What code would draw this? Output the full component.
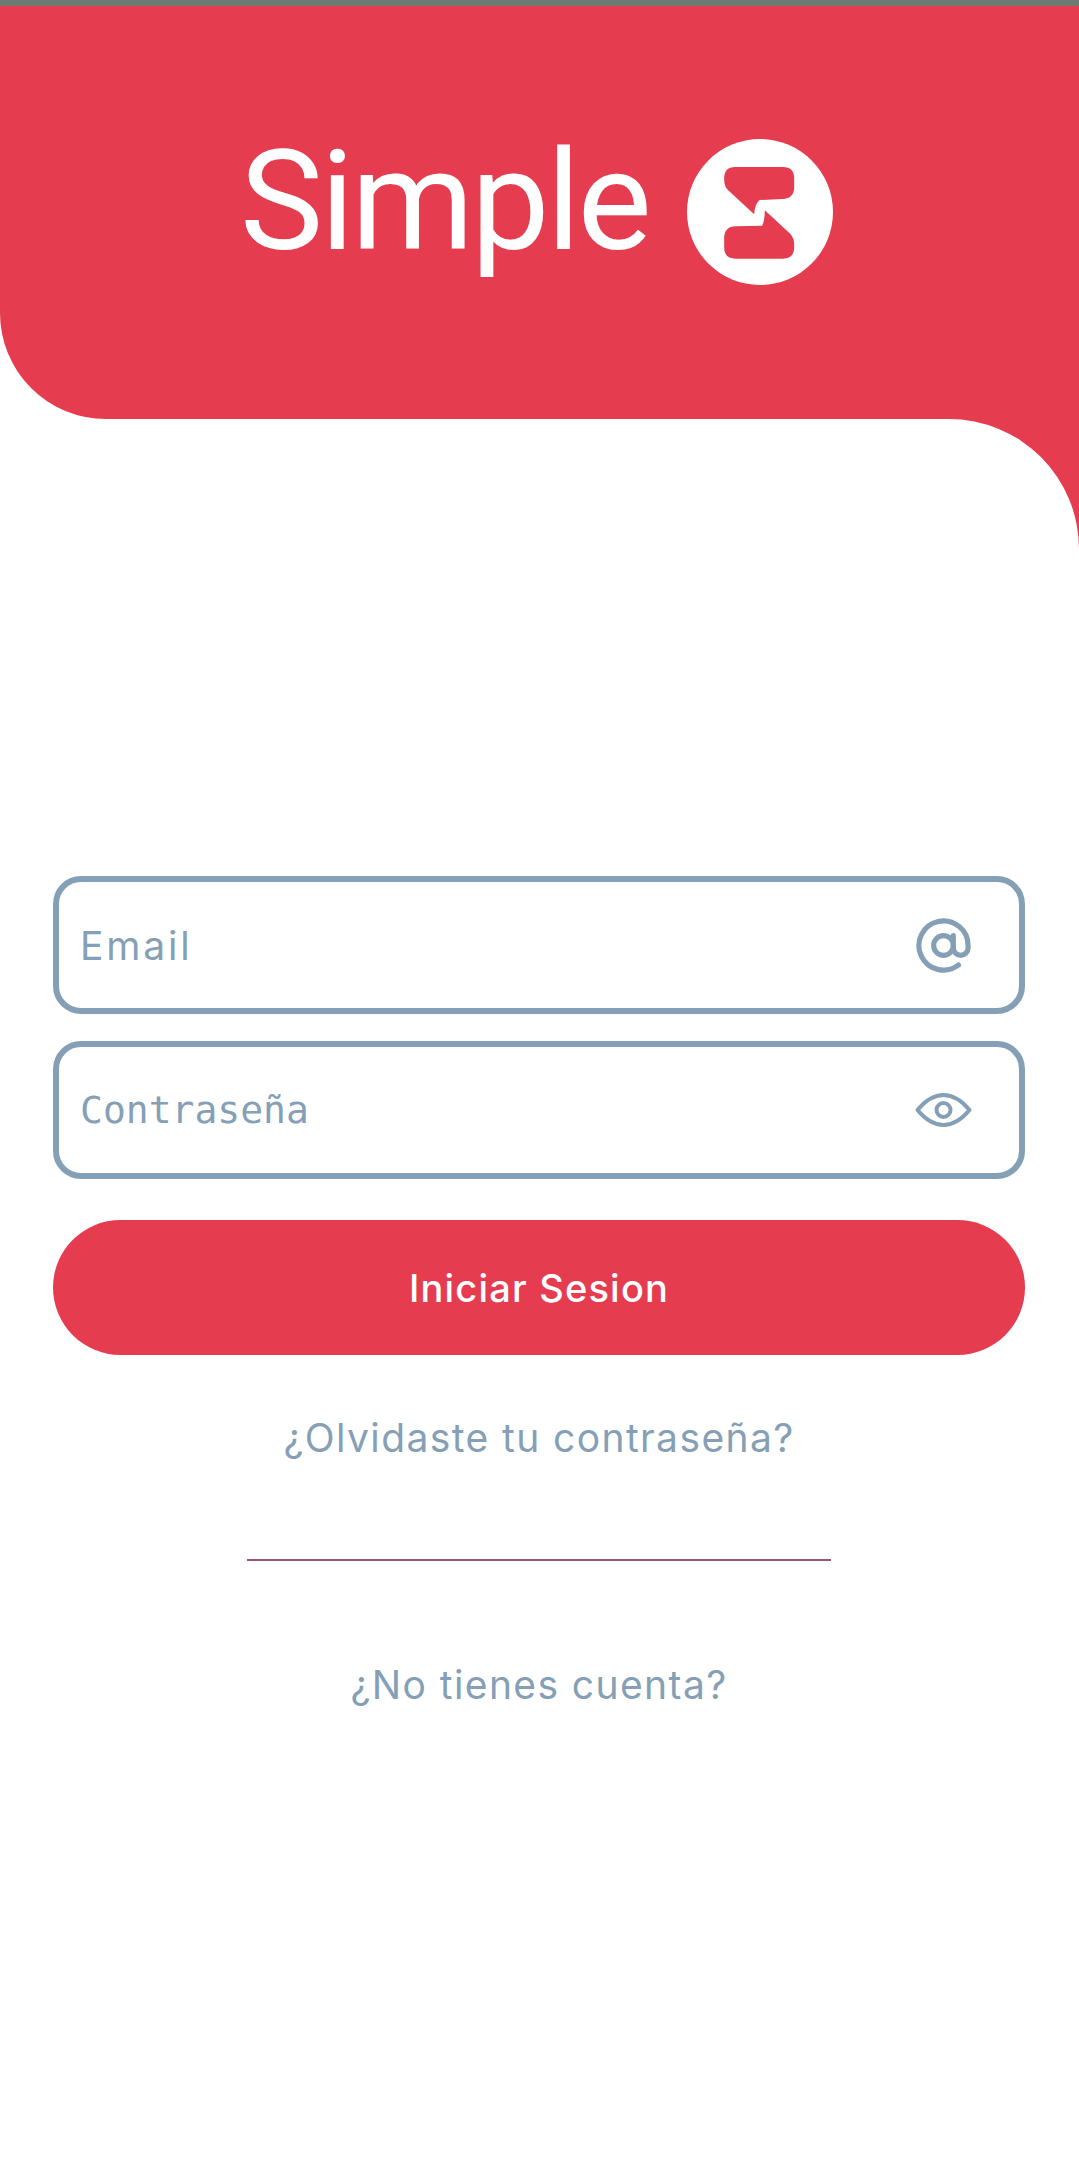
<div class="page">
  <div class="statusbar"></div>
  <header class="hero">
    <div class="brand">
      <span class="wordmark">Simple</span>
      <svg class="mark" viewBox="18.5 26 438 438" aria-hidden="true">
        <circle cx="237.5" cy="245" r="219" fill="#fff"/>
        <path fill="#e53c50" d="M164 110H306Q340 110 340 144V170Q340 205 305 206L236 209Q222 222 220 252L142 180Q130 168 130 148V144Q130 110 164 110Z"/>
        <path fill="#e53c50" d="M306 385H164Q130 385 130 351V324Q130 289 165 288L244 286Q252 270 252 240L328 310Q340 322 340 344V351Q340 385 306 385Z"/>
      </svg>
    </div>
  </header>
  <div class="shell">
    <main class="panel">
      <form class="form">
        <label class="field">
          <span class="ph email">Email</span>
          <svg class="icon" viewBox="0 0 24 24" fill="none" stroke="#85a0b6" stroke-width="2.1" stroke-linecap="round" stroke-linejoin="round" aria-hidden="true">
            <circle cx="12" cy="12" r="4"/>
            <path d="M16 8v5a3 3 0 0 0 6 0v-1a10 10 0 1 0-3.92 7.94"/>
          </svg>
        </label>
        <label class="field">
          <span class="ph pass">Contraseña</span>
          <svg class="icon eye" viewBox="0 0 59 36" fill="none" stroke="#85a0b6" stroke-width="4" stroke-linejoin="round" aria-hidden="true">
            <path d="M3.5 18Q16 3 29.5 3Q43 3 55.5 18Q43 33 29.5 33Q16 33 3.5 18Z"/>
            <circle cx="29.5" cy="18" r="7"/>
          </svg>
        </label>
        <button type="button" class="submit">Iniciar Sesion</button>
      </form>
      <a class="link forgot" href="#forgot">¿Olvidaste tu contraseña?</a>
      <hr class="rule" />
      <a class="link signup" href="#signup">¿No tienes cuenta?</a>
    </main>
  </div>
</div>

<style>
  :global(body) {
    margin: 0;
    background: #fff;
  }
  .page {
    width: 1079px;
    height: 2179px;
    overflow: hidden;
    background: #fff;
    display: flex;
    flex-direction: column;
    font-family: "Inter", "Open Sans", sans-serif;
  }
  .statusbar {
    height: 6px;
    background: #6e7a72;
  }
  .hero {
    height: 413px;
    background: #e53c50;
    border-bottom-left-radius: 106px;
    padding: 133px 0 0 240px;
    box-sizing: border-box;
  }
  .brand {
    display: flex;
    align-items: flex-start;
  }
  .wordmark {
    font-family: "Roboto", sans-serif;
    font-weight: 400;
    font-size: 140px;
    letter-spacing: -3px;
    line-height: 124px;
    color: #fff;
    width: 447px;
  }
  .mark {
    width: 146px;
    height: 146px;
    flex: none;
  }
  .shell {
    flex: 1;
    background: linear-gradient(#e53c50 0 130px, #fff 130px);
  }
  .panel {
    height: 100%;
    background: #fff;
    border-top-right-radius: 130px;
    padding: 457px 54px 0 53px;
    box-sizing: border-box;
    display: flex;
    flex-direction: column;
    align-items: center;
  }
  .form {
    width: 972px;
    display: flex;
    flex-direction: column;
    gap: 27px;
  }
  .field {
    height: 138px;
    box-sizing: border-box;
    border: 6px solid #85a0b6;
    border-radius: 28px;
    display: flex;
    align-items: center;
    justify-content: space-between;
    padding: 0 46px 0 21px;
    color: #85a0b6;
  }
  .ph {
    line-height: 1;
  }
  .email {
    font-size: 39px;
    letter-spacing: 2.8px;
  }
  .pass {
    font-family: "DejaVu Sans Mono", monospace;
    font-size: 38px;
  }
  .icon {
    width: 59px;
    height: 59px;
  }
  .eye {
    height: 36px;
  }
  .submit {
    height: 135px;
    margin-top: 14px;
    border: 0;
    border-radius: 68px;
    background: #e53c50;
    color: #fff;
    font-family: inherit;
    font-size: 38px;
    font-weight: 500;
    letter-spacing: 1.2px;
  }
  .link {
    color: #85a0b6;
    font-size: 39px;
    letter-spacing: 1.4px;
    line-height: 48px;
    text-decoration: none;
  }
  .forgot {
    margin-top: 59px;
  }
  .rule {
    width: 584px;
    height: 2px;
    margin: 97px 0 0;
    border: 0;
    background: #96566e;
  }
  .signup {
    margin-top: 100px;
  }
</style>
